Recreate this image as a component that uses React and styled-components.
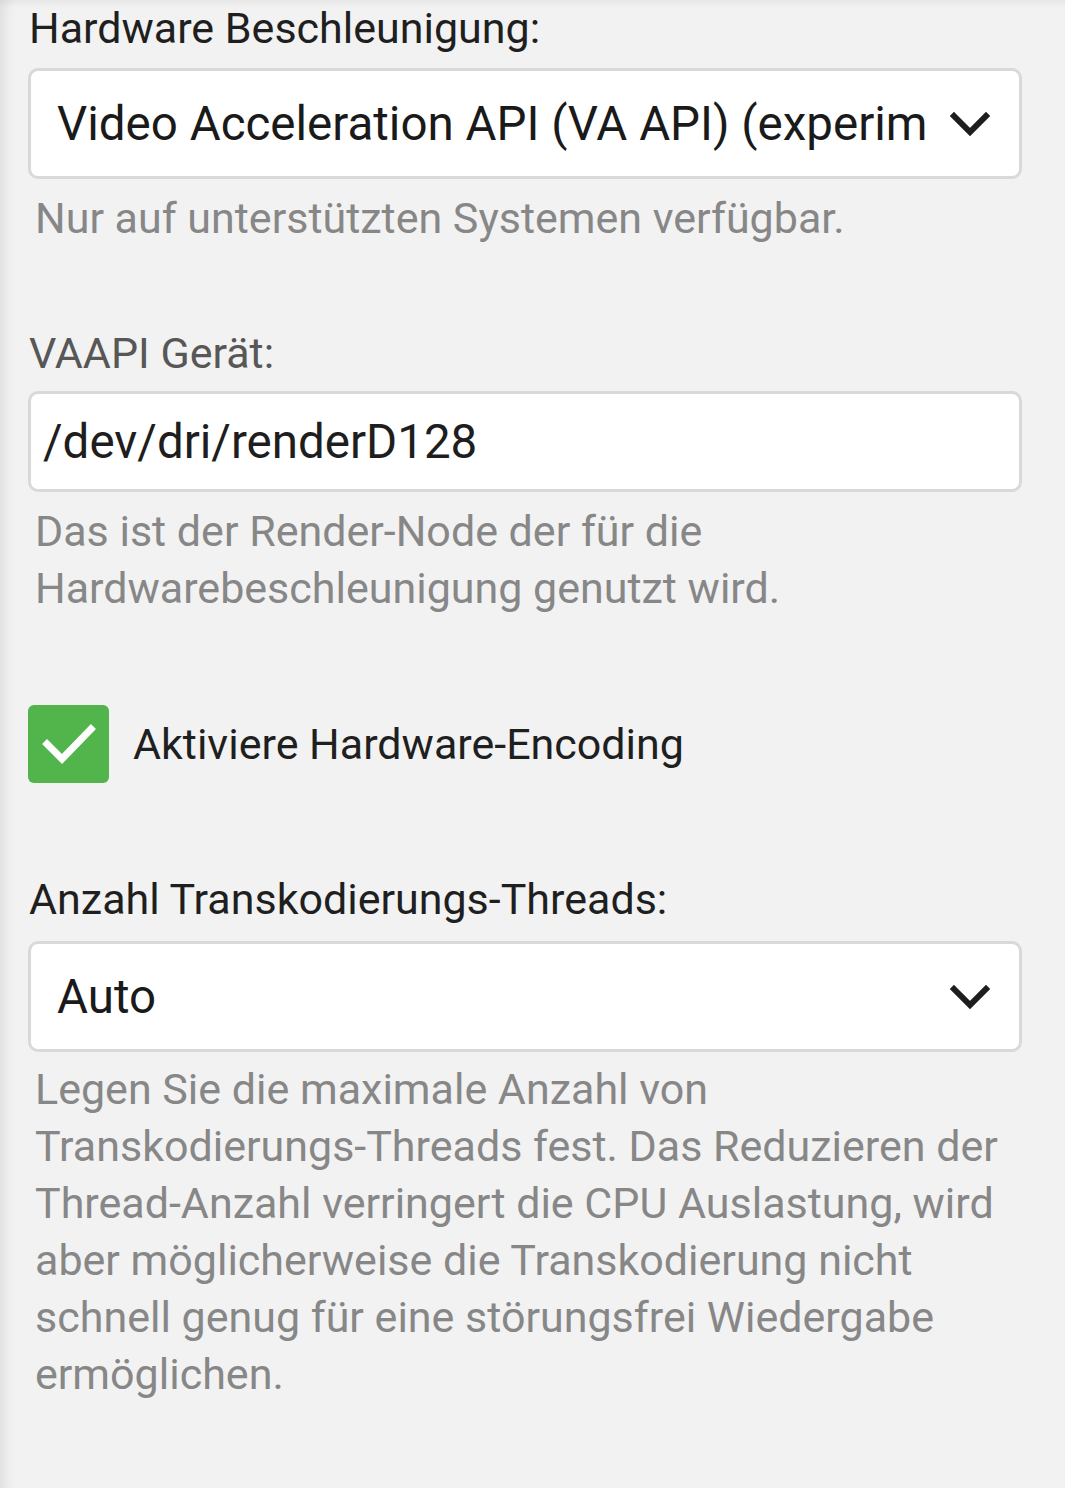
import React from "react";
import styled, { createGlobalStyle } from "styled-components";

const Global = createGlobalStyle`
  html, body { margin: 0; padding: 0; background: #f2f2f2; }
  body { font-family: Roboto, "Noto Sans", "Liberation Sans", sans-serif; }
  * { box-sizing: border-box; }
`;

const Page = styled.div`
  min-height: 1488px;
  background: #f2f2f2;
  padding: 0 43px 0 28px;
  box-shadow: inset 16px 0 14px -12px rgba(0, 0, 0, 0.09),
    inset 0 8px 8px -6px rgba(0, 0, 0, 0.07);
  display: flex;
  flex-direction: column;
`;

const Field = styled.div`
  display: flex;
  flex-direction: column;
  margin-bottom: ${(p) => p.$mb || 0}px;
`;

const Label = styled.label`
  font-size: 43px;
  line-height: 56px;
  color: ${(p) => (p.$muted ? "#575757" : "#1f1f1f")};
  padding-left: 1px;
  margin-bottom: ${(p) => p.$gap}px;
`;

const SelectBox = styled.div`
  height: 111px;
  background: #fff;
  border: 3px solid #d9d9d9;
  border-radius: 10px;
  display: flex;
  align-items: center;
  padding: 0 29px 0 26px;
  gap: 16px;
`;

const SelectText = styled.span`
  flex: 1;
  min-width: 0;
  font-size: 47.5px;
  color: #1a1a1a;
  white-space: nowrap;
  overflow: hidden;
`;

const InputBox = styled.div`
  height: 101px;
  background: #fff;
  border: 3px solid #d9d9d9;
  border-radius: 10px;
  display: flex;
  align-items: center;
  padding: 0 12px;
  font-size: 47.5px;
  color: #1e1e1e;
`;

const Description = styled.div`
  font-size: 43px;
  line-height: 57px;
  color: #878787;
  padding-left: 7px;
  margin-top: ${(p) => p.$mt}px;
`;

const CheckRow = styled.label`
  display: flex;
  align-items: center;
  gap: 24px;
  margin-bottom: 88px;
`;

const CheckBox = styled.span`
  width: 81px;
  height: 78px;
  border-radius: 6px;
  background: #52b54b;
  display: flex;
  align-items: center;
  justify-content: center;
  flex-shrink: 0;
`;

const CheckLabel = styled.span`
  font-size: 43px;
  color: #1f1f1f;
`;

const Chevron = () => (
  <svg width="40" height="28" viewBox="0 0 40 28" aria-hidden="true">
    <path d="M4 6 L20 22 L36 6" fill="none" stroke="#1e1e1e" strokeWidth="6" strokeLinecap="square" />
  </svg>
);

const Check = () => (
  <svg width="54" height="44" viewBox="0 0 54 44" aria-hidden="true">
    <path d="M5 22 L20 37 L49 7" fill="none" stroke="#fff" strokeWidth="7" strokeLinecap="square" />
  </svg>
);

export default function App() {
  return (
    <>
      <Global />
      <Page>
        <Field $mb={78}>
          <Label $gap={12}>Hardware Beschleunigung:</Label>
          <SelectBox>
            <SelectText>Video Acceleration API (VA API) (experim</SelectText>
            <Chevron />
          </SelectBox>
          <Description $mt={11}>Nur auf unterstützten Systemen verfügbar.</Description>
        </Field>
        <Field $mb={88}>
          <Label $muted $gap={10}>VAAPI Gerät:</Label>
          <InputBox>/dev/dri/renderD128</InputBox>
          <Description $mt={11}>
            Das ist der Render-Node der für die
            <br />
            Hardwarebeschleunigung genutzt wird.
          </Description>
        </Field>
        <CheckRow>
          <CheckBox>
            <Check />
          </CheckBox>
          <CheckLabel>Aktiviere Hardware-Encoding</CheckLabel>
        </CheckRow>
        <Field>
          <Label $gap={14}>Anzahl Transkodierungs-Threads:</Label>
          <SelectBox>
            <SelectText>Auto</SelectText>
            <Chevron />
          </SelectBox>
          <Description $mt={9}>
            Legen Sie die maximale Anzahl von
            <br />
            Transkodierungs-Threads fest. Das Reduzieren der
            <br />
            Thread-Anzahl verringert die CPU Auslastung, wird
            <br />
            aber möglicherweise die Transkodierung nicht
            <br />
            schnell genug für eine störungsfrei Wiedergabe
            <br />
            ermöglichen.
          </Description>
        </Field>
      </Page>
    </>
  );
}
